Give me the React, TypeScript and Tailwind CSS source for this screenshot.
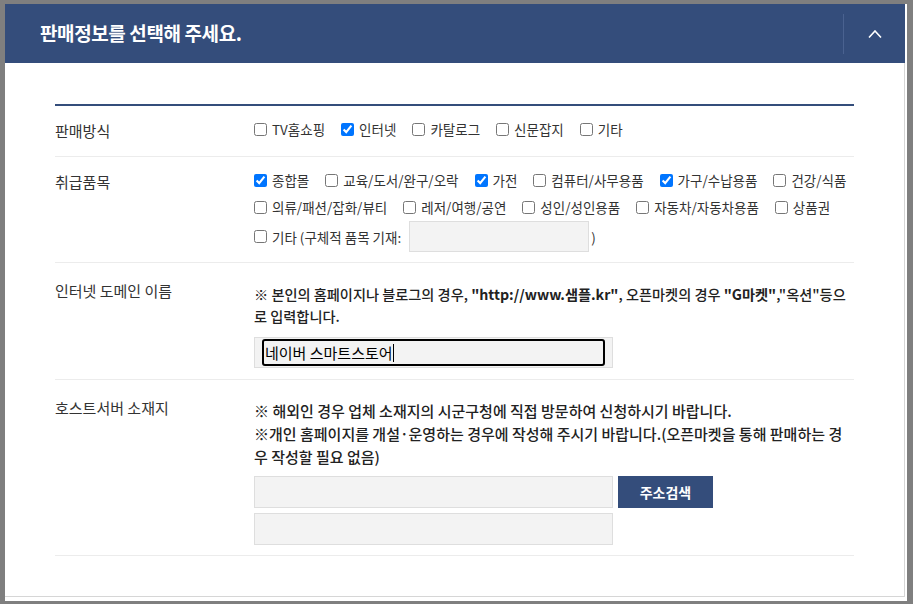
const font = { fontFamily: '"Noto Sans CJK KR", "Noto Sans", sans-serif' }

function Check({ label, checked }: { label: string; checked?: boolean }) {
  return (
    <label className="flex items-center gap-[5px] whitespace-nowrap">
      <input type="checkbox" defaultChecked={checked} className="m-0 w-[13px] h-[13px] accent-[#0075ff]" />
      <span>{label}</span>
    </label>
  )
}

function Row({ label, children, tall }: { label: string; children: React.ReactNode; tall?: boolean }) {
  return (
    <div className="flex border-b border-[#ececec]">
      <div className={`w-[199px] shrink-0 text-[15px] leading-[22px] text-[#333] ${tall ? 'pt-[17px]' : 'pt-[14px]'}`}>{label}</div>
      <div className="flex-1 min-w-0">{children}</div>
    </div>
  )
}

export default function App() {
  return (
    <div style={font} className="w-[913px] h-[604px] bg-[#7f7f7f] pl-[5px] pt-[4px] pr-[6px] pb-[3px]">
      <div className="h-full bg-white pr-[2px] pb-[4px] flex flex-col">
        <div className="h-[59px] bg-[#344d7b] flex items-center pl-[35px] shrink-0">
          <h1 className="flex-1 text-white text-[19px] font-bold tracking-[-0.4px]">판매정보를 선택해 주세요.</h1>
          <div className="w-px h-[40px] bg-[#4a6290]" />
          <div className="w-[61px] flex justify-center">
            <svg width="14" height="8" viewBox="0 0 14 8" fill="none">
              <polyline points="1,7.5 7,1 13,7.5" stroke="white" strokeWidth="1.6" />
            </svg>
          </div>
        </div>

        <div className="flex-1 border-r border-b border-[#d6d6d6] px-[50px] pt-[41px]">
          <div className="border-t-2 border-[#344d7b]">
            <Row label="판매방식">
              <div className="pt-[12px] pb-[16px] flex gap-[16px] text-[13.5px] leading-[22px] text-[#333]">
                <Check label="TV홈쇼핑" />
                <Check label="인터넷" checked />
                <Check label="카탈로그" />
                <Check label="신문잡지" />
                <Check label="기타" />
              </div>
            </Row>

            <Row label="취급품목">
              <div className="pt-[12px] pb-[10px] flex flex-col text-[13.5px] leading-[22px] text-[#333]">
                <div className="flex gap-[16px]">
                  <Check label="종합몰" checked />
                  <Check label="교육/도서/완구/오락" />
                  <Check label="가전" checked />
                  <Check label="컴퓨터/사무용품" />
                  <Check label="가구/수납용품" checked />
                  <Check label="건강/식품" />
                </div>
                <div className="mt-[5px] flex gap-[16px]">
                  <Check label="의류/패션/잡화/뷰티" />
                  <Check label="레저/여행/공연" />
                  <Check label="성인/성인용품" />
                  <Check label="자동차/자동차용품" />
                  <Check label="상품권" />
                </div>
                <div className="mt-[3px] flex items-center">
                  <Check label="기타 (구체적 품목 기재:" />
                  <input className="ml-[8px] w-[180px] h-[31px] bg-[#f3f3f3] border border-[#dedede] outline-none" />
                  <span className="ml-[2px]">)</span>
                </div>
              </div>
            </Row>

            <Row label="인터넷 도메인 이름" tall>
              <div className="pt-[20px] pb-[11px] text-[14.2px] leading-[22px] text-[#222] font-medium">
                <p className="whitespace-nowrap">
                  ※ 본인의 홈페이지나 블로그의 경우, <b>"http://www.샘플.kr"</b>, 오픈마켓의 경우 <b>"G마켓"</b>,"옥션"등으
                  <br />로 입력합니다.
                </p>
                <div className="mt-[10px] w-[359px] h-[31px] bg-[#f3f3f3] border border-[#dedede] px-[7px] py-px">
                  <div className="h-full border-2 border-black rounded-[3px] flex items-center pl-[1px] text-[15px] font-normal text-black">
                    네이버 스마트스토어<span className="w-px h-[18px] bg-black" />
                  </div>
                </div>
              </div>
            </Row>

            <Row label="호스트서버 소재지" tall>
              <div className="pt-[19px] pb-[10px] text-[15px] leading-[23px] text-[#222] font-medium">
                <p className="whitespace-nowrap">
                  ※ 해외인 경우 업체 소재지의 시군구청에 직접 방문하여 신청하시기 바랍니다.
                  <br />※개인 홈페이지를 개설·운영하는 경우에 작성해 주시기 바랍니다.(오픈마켓을 통해 판매하는 경
                  <br />우 작성할 필요 없음)
                </p>
                <div className="mt-[8px] flex gap-[5px]">
                  <input className="w-[359px] h-[32px] bg-[#f3f3f3] border border-[#dedede] outline-none" />
                  <button className="w-[95px] h-[32px] bg-[#344d7b] text-white text-[14px] font-bold">주소검색</button>
                </div>
                <input className="mt-[5px] block w-[359px] h-[32px] bg-[#f3f3f3] border border-[#dedede] outline-none" />
              </div>
            </Row>
          </div>
        </div>
      </div>
    </div>
  )
}
